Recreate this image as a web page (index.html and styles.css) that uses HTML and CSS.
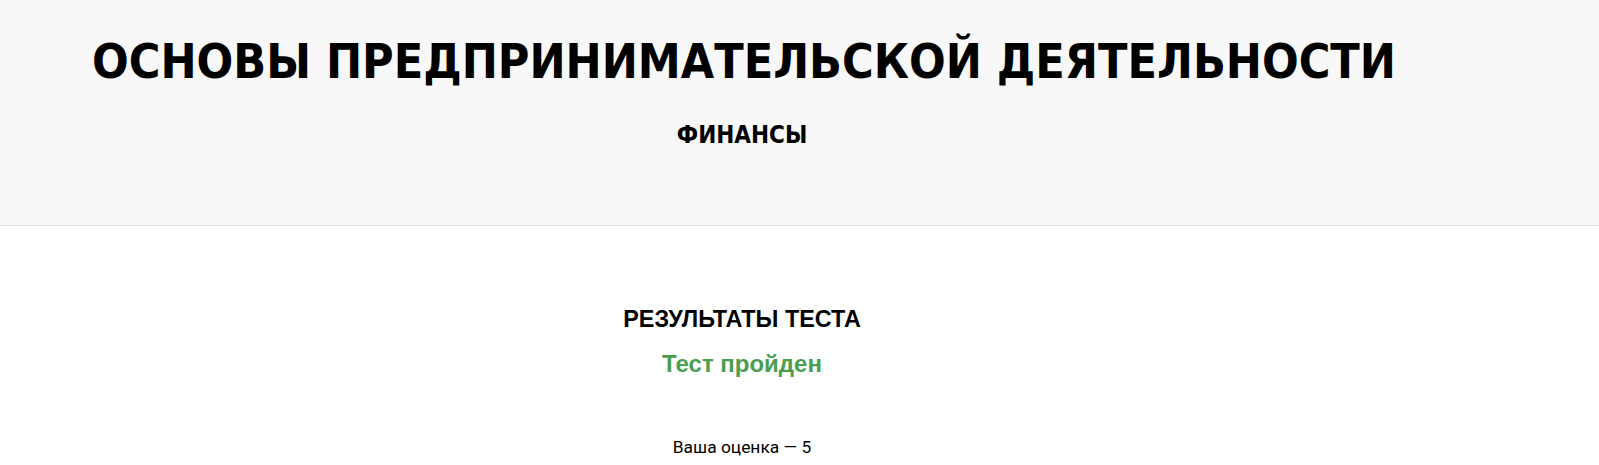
FILE: index.html
```html
<!DOCTYPE html>
<html lang="ru">
<head>
  <meta charset="utf-8">
  <meta name="viewport" content="width=device-width, initial-scale=1.0">
  <title>Основы предпринимательской деятельности</title>
  <link rel="stylesheet" href="styles.css">
</head>
<body>

  <header class="course-header">
    <div class="course-wrap">
      <h1 class="course-title">ОСНОВЫ ПРЕДПРИНИМАТЕЛЬСКОЙ ДЕЯТЕЛЬНОСТИ</h1>
      <div class="course-section">ФИНАНСЫ</div>
    </div>
  </header>

  <main class="course-wrap result">
    <h2 class="result-title">РЕЗУЛЬТАТЫ ТЕСТА</h2>
    <div class="result-status">Тест пройден</div>
    <p class="result-mark">Ваша оценка — 5</p>
  </main>

</body>
</html>
```
FILE: styles.css
```css
html, body {
  margin: 0;
  padding: 0;
  background: #ffffff;
  color: #000000;
  font-family: 'Liberation Sans', Arial, sans-serif;
}

.course-wrap {
  width: 1300px;
  margin-left: 92px;
}

.course-header {
  background-color: #f8f8f8;
  border-bottom: 1px solid #e0e0e0;
  padding: 31px 0 75px;
}

.course-title {
  margin: 0;
  font-family: 'DejaVu Sans Condensed', 'Liberation Sans Narrow', sans-serif;
  font-size: 48px;
  font-weight: 700;
  line-height: 60px;
  white-space: nowrap;
}

.course-section {
  margin-top: 29px;
  text-align: center;
  font-family: 'DejaVu Sans Condensed', 'Liberation Sans Narrow', sans-serif;
  font-size: 24px;
  font-weight: 700;
  line-height: 30px;
}

.result {
  padding-top: 79px;
  text-align: center;
}

.result-title {
  margin: 0;
  font-size: 23.4px;
  font-weight: 700;
  line-height: 28px;
}

.result-status {
  margin-top: 16px;
  font-size: 24px;
  font-weight: 700;
  line-height: 30px;
  color: #4a9e50;
}

.result-mark {
  margin: 58px 0 0;
  font-family: Roboto, sans-serif;
  font-size: 17.4px;
  line-height: 20px;
  color: #000000;
}
```
